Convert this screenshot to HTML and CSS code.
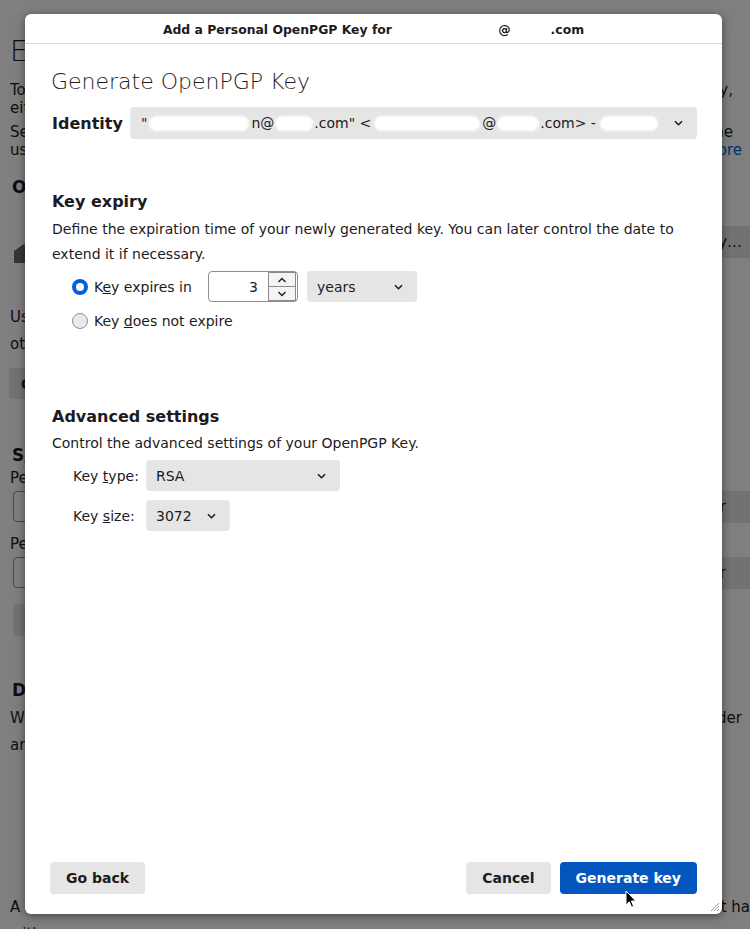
FILE: index.html
```html
<!DOCTYPE html>
<html>
<head>
<meta charset="utf-8">
<link rel="stylesheet" href="styles.css">
</head>
<body>
<div class="page">
  <h1 class="bg-h1">End</h1>
  <div class="bg-p1">
    <div class="bg-line"><span>To</span><span class="bg-edge">technology,</span></div>
    <div class="bg-line"><span>either</span></div>
  </div>
  <div class="bg-p2">
    <div class="bg-line"><span>Select</span><span class="bg-edge">the</span></div>
    <div class="bg-line"><span>use</span><a class="bg-link">Learn more</a></div>
  </div>
  <h2 class="bg-h2 bg-h2-first">Op</h2>
  <div class="bg-keyrow">
    <svg class="bg-icon" width="16" height="20" viewBox="0 0 16 20"><path d="M2 8 L12 1 L14 3 L14 20 L2 20 Z" fill="#6a6a6a"/></svg>
    <span class="bg-graybtn">Add Key…</span>
  </div>
  <div class="bg-p3">
    <div>Use</div>
    <div>other</div>
  </div>
  <div class="bg-btn">Co</div>
  <h2 class="bg-h2 bg-h2-smime">S/M</h2>
  <div class="bg-label bg-label-1">Per</div>
  <div class="bg-inrow"><span class="bg-input"></span><span class="bg-graybtn bg-clear">Clear</span></div>
  <div class="bg-label bg-label-2">Per</div>
  <div class="bg-inrow"><span class="bg-input"></span><span class="bg-graybtn bg-clear">Clear</span></div>
  <div class="bg-btn bg-btn-2"></div>
  <h2 class="bg-h2 bg-h2-def">De</h2>
  <div class="bg-p4">
    <div class="bg-line"><span>Wi</span><span>der</span></div>
    <div class="bg-line"><span>and</span></div>
  </div>
  <div class="bg-p5">
    <div class="bg-line"><span>A</span><span>t ha</span></div>
    <div class="bg-line"><span>with</span></div>
  </div>
</div>

<div class="scrim"></div>

<div class="dialog">
  <div class="dlg-header">
    <span>Add a Personal OpenPGP Key for </span><span class="hdr-gap1"></span><span>@</span><span class="hdr-gap2"></span><span>.com</span>
  </div>
  <div class="dlg-body">
    <div class="title">Generate OpenPGP Key</div>

    <div class="identity-row">
      <div class="identity-label">Identity</div>
      <div class="select identity-select">
        <span class="ident-text">"</span><span class="blob b1"></span><span class="ident-text">n@</span><span class="blob b2"></span><span class="ident-text">.com" &lt;</span><span class="blob b3"></span><span class="ident-text">@</span><span class="blob b4"></span><span class="ident-text">.com&gt; -</span><span class="blob b5"></span>
        <span class="spacer"></span>
        <svg class="chev" width="9" height="6" viewBox="0 0 9 6"><path d="M1 1.2 L4.5 4.7 L8 1.2" fill="none" stroke="#1c1b22" stroke-width="1.6"/></svg>
      </div>
    </div>

    <div class="section-h section-expiry">Key expiry</div>
    <div class="desc">Define the expiration time of your newly generated key. You can later control the date to extend it if necessary.</div>

    <div class="radio-row row-1">
      <span class="radio radio-on"></span>
      <span class="radio-label label-expires">K<u>e</u>y expires in</span>
      <div class="num">
        <span class="num-val">3</span>
        <span class="spin">
          <span class="spin-btn spin-up"><svg width="10" height="6" viewBox="0 0 10 6"><path d="M1.5 5 L5 1.5 L8.5 5" fill="none" stroke="#1c1b22" stroke-width="1.4"/></svg></span>
          <span class="spin-btn"><svg width="10" height="6" viewBox="0 0 10 6"><path d="M1.5 1 L5 4.5 L8.5 1" fill="none" stroke="#1c1b22" stroke-width="1.4"/></svg></span>
        </span>
      </div>
      <div class="select years-select">
        <span>years</span>
        <span class="spacer"></span>
        <svg class="chev" width="9" height="6" viewBox="0 0 9 6"><path d="M1 1.2 L4.5 4.7 L8 1.2" fill="none" stroke="#1c1b22" stroke-width="1.6"/></svg>
      </div>
    </div>
    <div class="radio-row row-2">
      <span class="radio"></span>
      <span class="radio-label">Key <u>d</u>oes not expire</span>
    </div>

    <div class="section-h section-adv">Advanced settings</div>
    <div class="desc desc-adv">Control the advanced settings of your OpenPGP Key.</div>

    <div class="field-row row-type">
      <span class="field-label">Key <u>t</u>ype:</span>
      <div class="select type-select">
        <span>RSA</span>
        <span class="spacer"></span>
        <svg class="chev" width="9" height="6" viewBox="0 0 9 6"><path d="M1 1.2 L4.5 4.7 L8 1.2" fill="none" stroke="#1c1b22" stroke-width="1.6"/></svg>
      </div>
    </div>
    <div class="field-row row-size">
      <span class="field-label">Key <u>s</u>ize:</span>
      <div class="select size-select">
        <span>3072</span>
        <span class="spacer"></span>
        <svg class="chev" width="9" height="6" viewBox="0 0 9 6"><path d="M1 1.2 L4.5 4.7 L8 1.2" fill="none" stroke="#1c1b22" stroke-width="1.6"/></svg>
      </div>
    </div>
  </div>
  <div class="dlg-footer">
    <button class="btn">Go back</button>
    <div class="footer-right">
      <button class="btn">Cancel</button>
      <button class="btn btn-primary">Generate key</button>
    </div>
  </div>
  <svg class="grip" width="12" height="12" viewBox="0 0 12 12"><path d="M11 3 L3 11 M11 6 L6 11 M11 9 L9 11" stroke="#9a9a9a" stroke-width="1"/></svg>
</div>

<svg class="cursor" width="12" height="19" viewBox="0 0 12 19"><path d="M1 1 L1 15 L4.3 11.8 L6.6 17.2 L8.6 16.3 L6.4 11 L10.8 11 Z" fill="#000" stroke="#fff" stroke-width="1"/></svg>
</body>
</html>
```

FILE: styles.css
```css
* { box-sizing: border-box; }

html, body {
  margin: 0;
  padding: 0;
}

body {
  width: 750px;
  height: 929px;
  overflow: hidden;
  position: relative;
  background: #ffffff;
  color: #1c1b22;
  font-family: "DejaVu Sans", "Noto Sans", sans-serif;
}

/* ---------- background page (dimmed) ---------- */
.page {
  padding: 0 8px 0 10px;
  font-size: 15px;
  color: #1c1b22;
}

.bg-h1 {
  margin: 34px 0 0;
  font-size: 28px;
  font-weight: 200;
  font-family: "DejaVu Sans ExtraLight", "DejaVu Sans", sans-serif;
  line-height: 36px;
  white-space: nowrap;
}

.bg-line {
  display: flex;
  justify-content: space-between;
  white-space: nowrap;
  overflow: hidden;
}
.bg-edge { margin-right: 9px; }

.bg-p1 { margin-top: 11px; line-height: 18px; }
.bg-p2 { margin-top: 6px; line-height: 18px; }
.bg-link { color: #0061e0; }

.bg-h2 {
  margin: 0;
  font-size: 17px;
  font-weight: bold;
  line-height: 22px;
  padding-left: 2px;
  white-space: nowrap;
}
.bg-h2-first { margin-top: 17px; }

.bg-keyrow {
  margin-top: 28px;
  height: 32px;
  display: flex;
  justify-content: space-between;
  align-items: flex-start;
  margin-right: -8px;
}
.bg-icon { margin: 17px 0 0 2px; }

.bg-graybtn {
  background: #e5e5e5;
  height: 32px;
  width: 130px;
  display: flex;
  align-items: center;
  padding-left: 10px;
  border-radius: 4px 0 0 4px;
  white-space: nowrap;
}
.bg-keyrow .bg-graybtn { padding-left: 46px; }

.bg-p3 { margin-top: 45.5px; line-height: 27px; white-space: nowrap; }

.bg-btn {
  margin-top: 10.5px;
  height: 31px;
  width: 140px;
  background: #e5e5e5;
  border-radius: 4px;
  display: flex;
  align-items: center;
  padding-left: 12px;
  margin-left: -1px;
  font-weight: bold;
  font-size: 14px;
  white-space: nowrap;
}

.bg-h2-smime { margin-top: 45px; }
.bg-label { line-height: 18px; white-space: nowrap; }
.bg-label-1 { margin-top: 3px; }
.bg-label-2 { margin-top: 13px; }

.bg-inrow {
  margin-top: 4px;
  height: 31px;
  display: flex;
  justify-content: space-between;
  margin-right: -8px;
  padding-left: 3px;
}
.bg-input {
  width: 560px;
  height: 31px;
  border: 1px solid #8f8f9d;
  border-radius: 4px;
  background: #fff;
}
.bg-clear {
  width: 80px;
  height: 32px;
  justify-content: flex-end;
  padding: 0 24px 0 0;
}

.bg-btn-2 { margin-top: 16px; height: 32px; margin-left: 3px; width: 240px; }

.bg-h2-def { margin-top: 43px; }
.bg-p4 { margin-top: 3.5px; line-height: 27px; }
.bg-p5 { margin-top: 135px; line-height: 27px; margin-right: -8px; }

.scrim {
  position: absolute;
  inset: 0;
  background: rgba(0, 0, 0, 0.5);
}

/* ---------- dialog ---------- */
.dialog {
  position: absolute;
  left: 25px;
  top: 14px;
  width: 697px;
  height: 900px;
  background: #ffffff;
  border-radius: 6px;
  box-shadow: 0 2px 10px rgba(0, 0, 0, 0.45);
  display: flex;
  flex-direction: column;
  overflow: hidden;
}

.dlg-header {
  height: 30px;
  border-bottom: 1px solid #d9d9d9;
  display: flex;
  align-items: center;
  justify-content: center;
  font-size: 12.4px;
  font-weight: bold;
  white-space: pre;
  padding-top: 1px;
}
.hdr-gap1 { width: 102px; }
.hdr-gap2 { width: 40px; }

.dlg-body {
  flex: 1;
  padding: 0 25px 0 27px;
  font-size: 14px;
}

.title {
  margin-top: 23px;
  font-size: 22px;
  line-height: 30px;
  font-weight: 200;
  font-family: "DejaVu Sans ExtraLight", "DejaVu Sans", sans-serif;
  color: #1c1b22;
  margin-left: -1px;
}

.identity-row {
  margin-top: 10px;
  display: flex;
  align-items: center;
}
.identity-label {
  width: 78px;
  font-size: 16px;
  font-weight: bold;
}

.select {
  background: #e5e5e5;
  border-radius: 4px;
  display: flex;
  align-items: center;
  height: 31px;
  padding: 0 14px 0 10px;
  font-size: 14px;
  white-space: nowrap;
}
.spacer { flex: 1; }
.chev { display: block; flex: none; }

.identity-select {
  flex: 1;
  height: 32px;
  padding-left: 11px;
}
.blob {
  display: inline-block;
  height: 15px;
  background: #ffffff;
  border-radius: 8px;
  filter: blur(0.8px);
}
.b1 { width: 100px; margin: 0 2px 0 2px; }
.b2 { width: 38px; margin: 0 1px; }
.b3 { width: 106px; margin: 0 2px 0 3px; }
.b4 { width: 42px; margin: 0 1px; }
.b5 { width: 58px; margin-left: 4px; }

.section-h {
  font-size: 16px;
  font-weight: bold;
  line-height: 22px;
}
.section-expiry { margin-top: 52px; }

.desc {
  margin-top: 4px;
  line-height: 25px;
}

.radio-row {
  display: flex;
  align-items: center;
  margin-left: 20px;
}
.row-1 { margin-top: 4px; height: 31px; }
.row-2 { margin-top: 7px; height: 24px; }

.radio {
  width: 16px;
  height: 16px;
  border-radius: 50%;
  border: 1px solid #8f8f9d;
  background: #e9e9ed;
  flex: none;
}
.radio-on {
  border: 4px solid #0061e0;
  background: #ffffff;
}
.radio-label { margin-left: 6px; }
.label-expires { width: 114px; }

.num {
  width: 90px;
  height: 31px;
  border: 1px solid #8f8f9d;
  border-radius: 4px;
  display: flex;
  align-items: center;
  padding: 1px 1px 1px 0;
  background: #fff;
}
.num-val {
  flex: 1;
  text-align: right;
  padding-right: 10px;
}
.spin {
  width: 28px;
  height: 29px;
  border: 1px solid #8a8a8a;
  display: flex;
  flex-direction: column;
  background: #f4f4f4;
}
.spin-btn {
  flex: 1;
  display: flex;
  align-items: center;
  justify-content: center;
}
.spin-up { border-bottom: 1px solid #8a8a8a; }

.years-select {
  width: 110px;
  margin-left: 9px;
}

.section-adv { margin-top: 73px; }
.desc-adv { margin-top: 3px; }

.field-row {
  display: flex;
  align-items: center;
  margin-left: 21px;
}
.row-type { margin-top: 4px; }
.row-size { margin-top: 9px; }
.field-label { width: 73px; }
.type-select { width: 194px; }
.size-select { width: 84px; }

.dlg-footer {
  display: flex;
  justify-content: space-between;
  padding: 0 25px 20px 25px;
}
.footer-right {
  display: flex;
  gap: 9px;
}
.btn {
  height: 32px;
  border: none;
  border-radius: 4px;
  background: #e5e5e5;
  color: #1c1b22;
  font-family: "DejaVu Sans", sans-serif;
  font-size: 14px;
  font-weight: bold;
  padding: 0 16px;
}
.btn-primary {
  background: #0456bf;
  color: #ffffff;
}

.grip {
  position: absolute;
  right: 2px;
  bottom: 2px;
}

.cursor {
  position: absolute;
  left: 625px;
  top: 890px;
}
```
